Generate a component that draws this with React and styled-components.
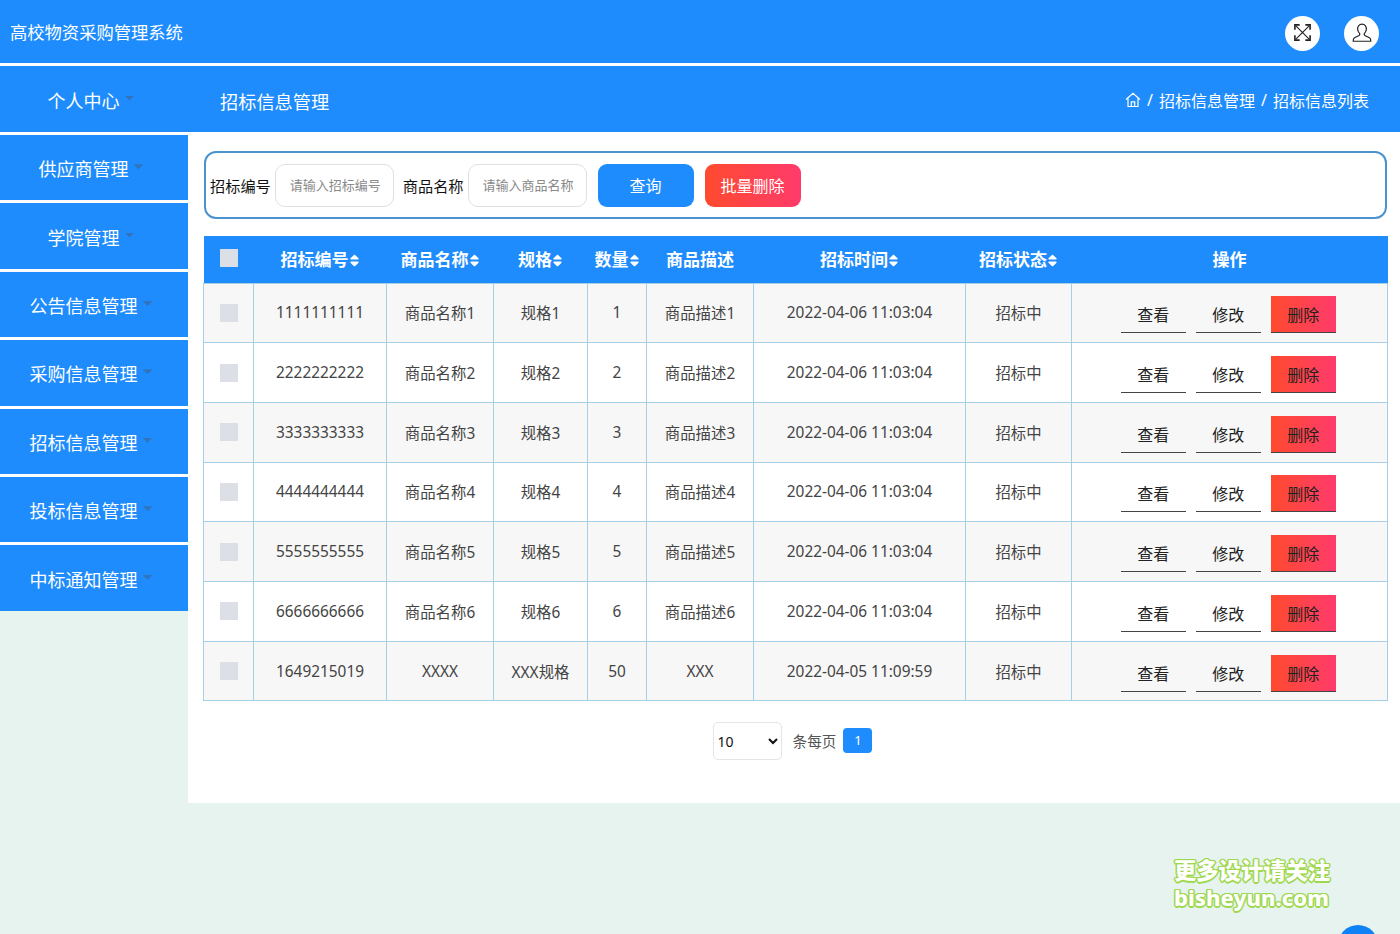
import React from "react";
import styled, { createGlobalStyle } from "styled-components";
import { FaSort } from "react-icons/fa";

const BLUE = "#1e8cfd";
const FONT = '"Noto Sans", "Noto Sans CJK SC", sans-serif';

const GlobalStyle = createGlobalStyle`
  html, body {
    margin: 0;
    padding: 0;
    height: 934px;
    overflow: hidden;
    background: #e6f3ee;
    font-family: ${FONT};
  }
  * {
    box-sizing: border-box;
  }
`;

const Page = styled.div`
  width: 1400px;
  height: 934px;
  position: relative;
  overflow: hidden;
`;

const TopBar = styled.header`
  height: 66px;
  background: ${BLUE};
  border-bottom: 3px solid #fff;
  display: flex;
  align-items: center;
  justify-content: space-between;
  padding: 0 21px 0 10px;
`;

const Brand = styled.div`
  color: #fff;
  font-size: 17.3px;
`;

const TopActions = styled.div`
  display: flex;
  gap: 24px;
  margin-top: 3px;
`;

const RoundButton = styled.div`
  width: 35px;
  height: 35px;
  border-radius: 50%;
  background: #fff;
  display: flex;
  align-items: center;
  justify-content: center;
  color: #222;
  padding-bottom: 1px;
`;

const Body = styled.div`
  display: flex;
  align-items: flex-start;
`;

const Sidebar = styled.nav`
  width: 188px;
  flex: none;
  display: flex;
  flex-direction: column;
`;

const MenuItem = styled.div`
  height: 68.4px;
  background: ${BLUE};
  border-bottom: 3px solid #fff;
  color: #fff;
  font-size: 18px;
  display: flex;
  align-items: center;
  justify-content: center;
  padding: 1px 6px 0 0;

  &:first-child {
    height: 69px;
  }

  &:last-child {
    height: 66px;
    border-bottom: 0;
  }
`;

const Caret = styled.span`
  flex: none;
  width: 10px;
  height: 5px;
  margin: 0 0 3px 5px;
  background: #2f74bd;
  clip-path: polygon(0 0, 100% 0, 50% 100%);
`;

const Main = styled.main`
  flex: 1;
  min-width: 0;
`;

const TitleBar = styled.div`
  height: 66px;
  background: ${BLUE};
  color: #fff;
  display: flex;
  align-items: center;
  justify-content: space-between;
  padding: 2px 31px 0 32px;
`;

const Title = styled.div`
  font-size: 18.2px;
  margin-top: 2px;
`;

const Crumbs = styled.div`
  display: flex;
  align-items: center;
  gap: 6px;
  font-size: 16px;
`;

const Content = styled.div`
  height: 671px;
  background: #fff;
  padding: 19px 13px 0 16px;
`;

const SearchCard = styled.form`
  height: 68px;
  border: 2px solid #4a93cf;
  border-radius: 12px;
  display: flex;
  align-items: center;
  padding-left: 4px;
  background: #fff;
`;

const Label = styled.label`
  font-size: 15.2px;
  color: #111;
  margin-right: 4px;
`;

const TextInput = styled.input`
  width: 119px;
  height: 43px;
  border: 1px solid #e0e0e0;
  border-radius: 10px;
  padding: 0 0 0 14px;
  margin-right: 9px;
  font-family: ${FONT};
  font-size: 13px;
  outline: none;

  &::placeholder {
    color: #8a8a8a;
    opacity: 1;
  }
`;

const SearchButton = styled.button`
  width: 96px;
  height: 43px;
  margin-left: ${(p) => p.$gap}px;
  border: 0;
  border-radius: 9px;
  color: #fff;
  font-family: ${FONT};
  font-size: 16px;
  background: ${(p) =>
    p.$danger ? "linear-gradient(90deg, #ff4a2e, #ff3b6b)" : BLUE};
`;

const Table = styled.table`
  width: 1184px;
  margin: 17px 0 0 -1px;
  border-collapse: collapse;
  table-layout: fixed;
  font-size: 15.4px;
  color: #444;
`;

const HeadRow = styled.tr`
  height: 47px;
  background: ${BLUE};
`;

const HeadCell = styled.th`
  color: #fff;
  font-size: 17px;
  font-weight: 700;
  padding: 0 0 2px;
  text-align: center;
`;

const SortIcon = styled(FaSort)`
  width: 11px;
  height: 15px;
  vertical-align: -2px;
`;

const Row = styled.tr`
  height: 59.71px;
  background: ${(p) => (p.$odd ? "#f7f7f7" : "#fff")};
`;

const Cell = styled.td`
  border: 1px solid #a5cfe4;
  padding: 0;
  text-align: center;
`;

const Check = styled.input.attrs({ type: "checkbox" })`
  appearance: none;
  display: block;
  width: 18px;
  height: 18px;
  margin: 0 0 0 16px;
  background: #dcdfe6;
`;

const Actions = styled.div`
  display: flex;
  gap: 10.5px;
  padding: 4px 0 0 49px;
`;

const ActionButton = styled.button`
  width: 64.5px;
  height: 37px;
  padding: 0;
  border: 0;
  border-bottom: 1px solid #444;
  color: #222;
  font-family: ${FONT};
  font-size: 16px;
  background: ${(p) =>
    p.$danger ? "linear-gradient(90deg, #ff4a2e, #ff3b6b)" : "transparent"};
`;

const Pager = styled.div`
  display: flex;
  align-items: center;
  justify-content: center;
  margin-top: 21px;
  padding-right: 6px;
`;

const SizeSelect = styled.select`
  width: 69px;
  height: 38px;
  border: 1px solid #e5e5e5;
  border-radius: 5px;
  background: #fff;
  font-family: ${FONT};
  font-size: 14px;
  color: #111;
`;

const PagerText = styled.span`
  margin: 0 7px 2px 11px;
  font-size: 14.6px;
  color: #555;
`;

const PageNum = styled.span`
  width: 29px;
  height: 25px;
  margin-bottom: 2px;
  border-radius: 4px;
  background: ${BLUE};
  color: #fff;
  font-size: 13px;
  display: flex;
  align-items: center;
  justify-content: center;
`;

const Watermark = styled.div`
  position: absolute;
  left: 1174px;
  top: 857px;
  color: #fff;
  font-weight: 800;
  line-height: 27px;
  text-shadow: 1.5px 0 0 #9ed84e, -1.5px 0 0 #9ed84e, 0 1.5px 0 #9ed84e,
    0 -1.5px 0 #9ed84e, 1px 1px 0 #9ed84e, -1px 1px 0 #9ed84e,
    1px -1px 0 #9ed84e, -1px -1px 0 #9ed84e;
`;

const WatermarkCn = styled.div`
  font-size: 22.3px;
`;

const WatermarkEn = styled.div`
  font-size: 22px;
`;

const BackTop = styled.div`
  position: absolute;
  left: 1338px;
  top: 925px;
  width: 40px;
  height: 40px;
  border-radius: 50%;
  background: #0f83f5;
`;

const ExpandIcon = () => (
  <svg width="19" height="19" viewBox="0 0 20 20" fill="none" stroke="currentColor" strokeWidth="1.2">
    <path d="M3 3l14 14M17 3L3 17" />
    <path d="M2 7V2h5M13 2h5v5M2 13v5h5M18 13v5h-5" strokeWidth="1.7" />
  </svg>
);

const UserIcon = () => (
  <svg width="22" height="22" viewBox="0 0 20 20" fill="none" stroke="currentColor" strokeWidth="1.1">
    <path d="M10 2c-2.600 0-4 1.900-4 4.200 0 1.900.8 3.200 1.700 4.100.5.600.4 1.500-.3 1.900l-4.200 2.100c-1 .5-1.300 1.400-1.200 3.200h16c.1-1.800-.2-2.700-1.200-3.200l-4.200-2.100c-.7-.4-.8-1.300-.3-1.900.9-.9 1.700-2.200 1.700-4.100C14 3.900 12.600 2 10 2z" />
  </svg>
);

const HomeIcon = () => (
  <svg width="16" height="16" viewBox="0 0 16 16" fill="none" stroke="currentColor" strokeWidth="1.2">
    <path d="M1 7.500L8 1.200l7 6.300M3 6v8.500h10V6M6.300 14.500V9.800h3.400v4.700" />
  </svg>
);

const menus = [
  "个人中心",
  "供应商管理",
  "学院管理",
  "公告信息管理",
  "采购信息管理",
  "招标信息管理",
  "投标信息管理",
  "中标通知管理",
];

const columns = [
  { width: 50 },
  { width: 133, title: "招标编号", sort: true },
  { width: 107, title: "商品名称", sort: true },
  { width: 94, title: "规格", sort: true },
  { width: 59, title: "数量", sort: true },
  { width: 107, title: "商品描述" },
  { width: 212, title: "招标时间", sort: true },
  { width: 106, title: "招标状态", sort: true },
  { width: 316, title: "操作" },
];

const rows = [
  ["1111111111", "商品名称1", "规格1", 1, "商品描述1", "2022-04-06 11:03:04"],
  ["2222222222", "商品名称2", "规格2", 2, "商品描述2", "2022-04-06 11:03:04"],
  ["3333333333", "商品名称3", "规格3", 3, "商品描述3", "2022-04-06 11:03:04"],
  ["4444444444", "商品名称4", "规格4", 4, "商品描述4", "2022-04-06 11:03:04"],
  ["5555555555", "商品名称5", "规格5", 5, "商品描述5", "2022-04-06 11:03:04"],
  ["6666666666", "商品名称6", "规格6", 6, "商品描述6", "2022-04-06 11:03:04"],
  ["1649215019", "XXXX", "XXX规格", 50, "XXX", "2022-04-05 11:09:59"],
];

const App = () => {
  return (
    <Page>
      <GlobalStyle />
      <TopBar>
        <Brand>高校物资采购管理系统</Brand>
        <TopActions>
          <RoundButton>
            <ExpandIcon />
          </RoundButton>
          <RoundButton>
            <UserIcon />
          </RoundButton>
        </TopActions>
      </TopBar>
      <Body>
        <Sidebar>
          {menus.map((name) => (
            <MenuItem key={name}>
              {name}
              <Caret />
            </MenuItem>
          ))}
        </Sidebar>
        <Main>
          <TitleBar>
            <Title>招标信息管理</Title>
            <Crumbs>
              <HomeIcon />
              <span>/</span>
              <span>招标信息管理</span>
              <span>/</span>
              <span>招标信息列表</span>
            </Crumbs>
          </TitleBar>
          <Content>
            <SearchCard>
              <Label>招标编号</Label>
              <TextInput placeholder="请输入招标编号" />
              <Label>商品名称</Label>
              <TextInput placeholder="请输入商品名称" />
              <SearchButton type="button" $gap={2}>
                查询
              </SearchButton>
              <SearchButton type="button" $gap={11} $danger>
                批量删除
              </SearchButton>
            </SearchCard>
            <Table>
              <colgroup>
                {columns.map((col, i) => (
                  <col key={i} style={{ width: col.width }} />
                ))}
              </colgroup>
              <thead>
                <HeadRow>
                  {columns.map((col, i) => (
                    <HeadCell key={i}>
                      {i === 0 && <Check />}
                      {col.title}
                      {col.sort && <SortIcon />}
                    </HeadCell>
                  ))}
                </HeadRow>
              </thead>
              <tbody>
                {rows.map((row, i) => (
                  <Row key={row[0]} $odd={i % 2 === 0}>
                    <Cell>
                      <Check />
                    </Cell>
                    {row.map((value, j) => (
                      <Cell key={j}>{value}</Cell>
                    ))}
                    <Cell>招标中</Cell>
                    <Cell>
                      <Actions>
                        <ActionButton>查看</ActionButton>
                        <ActionButton>修改</ActionButton>
                        <ActionButton $danger>删除</ActionButton>
                      </Actions>
                    </Cell>
                  </Row>
                ))}
              </tbody>
            </Table>
            <Pager>
              <SizeSelect defaultValue="10">
                <option value="10">10</option>
                <option value="20">20</option>
              </SizeSelect>
              <PagerText>条每页</PagerText>
              <PageNum>1</PageNum>
            </Pager>
          </Content>
        </Main>
      </Body>
      <Watermark>
        <WatermarkCn>更多设计请关注</WatermarkCn>
        <WatermarkEn>bisheyun.com</WatermarkEn>
      </Watermark>
      <BackTop />
    </Page>
  );
};

export default App;
